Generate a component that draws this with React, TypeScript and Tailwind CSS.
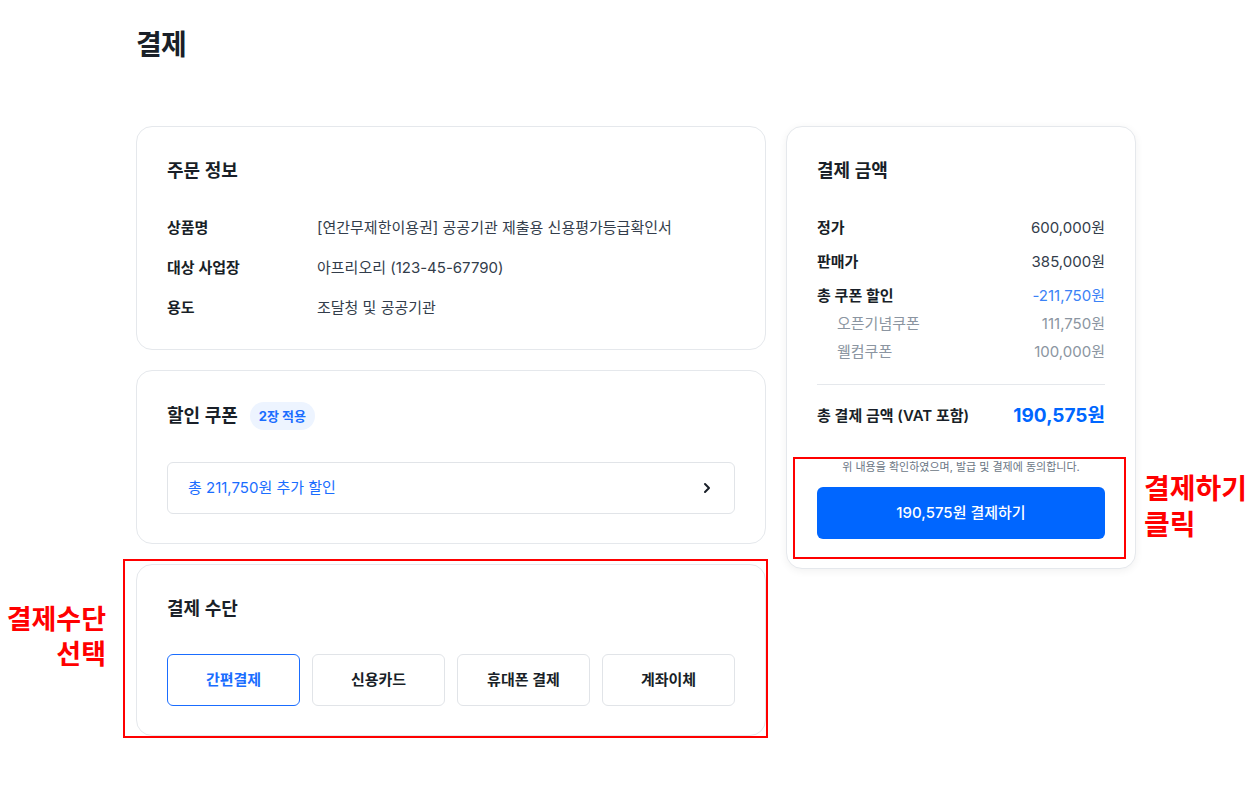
import React, { useState } from 'react';

const FONT = 'font-["Inter","Noto_Sans_CJK_KR",sans-serif]';

const orderRows = [
  { label: '상품명', value: '[연간무제한이용권] 공공기관 제출용 신용평가등급확인서' },
  { label: '대상 사업장', value: '아프리오리 (123-45-67790)' },
  { label: '용도', value: '조달청 및 공공기관' },
];

const methods = ['간편결제', '신용카드', '휴대폰 결제', '계좌이체'];

function Card({ children }: { children: React.ReactNode }) {
  return (
    <div className="rounded-2xl border border-[#e5e8ec] bg-white px-[30px] pt-[31px] pb-[29px]">
      {children}
    </div>
  );
}

export default function App() {
  const [method, setMethod] = useState(0);

  return (
    <div className={`${FONT} relative min-h-[788px] bg-white text-[#191f28]`}>
      <div className="ml-[136px] w-[1000px] pt-[27px]">
        <h1 className="text-[28px] font-bold leading-9 tracking-tight">결제</h1>

        <div className="mt-[63px] flex items-start gap-5">
          {/* left column */}
          <div className="flex w-[630px] flex-col gap-5">
            {/* 주문 정보 */}
            <Card>
              <h2 className="text-lg font-semibold leading-[26px]">주문 정보</h2>
              <div className="mt-8 flex flex-col gap-4">
                {orderRows.map((row) => (
                  <div key={row.label} className="flex text-[15px] leading-6">
                    <span className="w-[150px] font-semibold">{row.label}</span>
                    <span className="text-[#333d4b]">{row.value}</span>
                  </div>
                ))}
              </div>
            </Card>

            {/* 할인 쿠폰 */}
            <Card>
              <div className="flex items-center gap-3">
                <h2 className="text-lg font-semibold leading-[26px]">할인 쿠폰</h2>
                <span className="rounded-full bg-[#edf4ff] px-[9px] text-[13px] font-bold leading-7 text-[#1a6dff]">
                  2장 적용
                </span>
              </div>
              <button
                type="button"
                className="mt-8 flex h-[52px] w-full items-center justify-between rounded-md border border-[#e1e4e8] px-5 text-[15px] text-[#1a6dff]"
              >
                <span>총 211,750원 추가 할인</span>
                <svg width="14" height="14" viewBox="0 0 14 14" fill="none">
                  <path d="M5 3l4 4-4 4" stroke="#191f28" strokeWidth="2" strokeLinecap="round" strokeLinejoin="round" />
                </svg>
              </button>
            </Card>

            {/* 결제 수단 */}
            <Card>
              <h2 className="text-lg font-semibold leading-[26px]">결제 수단</h2>
              <div className="mt-8 grid grid-cols-4 gap-3">
                {methods.map((m, i) => (
                  <button
                    key={m}
                    type="button"
                    onClick={() => setMethod(i)}
                    className={`h-[52px] rounded-md border text-[15px] font-semibold ${
                      method === i ? 'border-[#1a6dff] text-[#1a6dff]' : 'border-[#e1e4e8] text-[#191f28]'
                    }`}
                  >
                    {m}
                  </button>
                ))}
              </div>
            </Card>
          </div>

          {/* right column */}
          <div className="w-[350px] rounded-2xl border border-[#e5e8ec] bg-white px-[30px] pt-[31px] pb-[29px] shadow-[0_2px_8px_rgba(0,0,0,0.06)]">
            <h2 className="text-lg font-semibold leading-[26px]">결제 금액</h2>
            <div className="mt-8 flex flex-col text-[15px] leading-6">
              <div className="flex justify-between">
                <span className="font-semibold">정가</span>
                <span className="text-[#333d4b]">600,000원</span>
              </div>
              <div className="mt-[10px] flex justify-between">
                <span className="font-semibold">판매가</span>
                <span className="text-[#333d4b]">385,000원</span>
              </div>
              <div className="mt-[10px] flex justify-between">
                <span className="font-semibold">총 쿠폰 할인</span>
                <span className="text-[#3b82f6]">-211,750원</span>
              </div>
              <div className="mt-1 flex justify-between pl-5 text-[#8b95a1]">
                <span>오픈기념쿠폰</span>
                <span>111,750원</span>
              </div>
              <div className="mt-1 flex justify-between pl-5 text-[#8b95a1]">
                <span>웰컴쿠폰</span>
                <span>100,000원</span>
              </div>
            </div>
            <div className="mt-5 h-px bg-[#e5e8ec]" />
            <div className="mt-4 flex items-center justify-between leading-[30px]">
              <span className="text-[15px] font-semibold">총 결제 금액 (VAT 포함)</span>
              <span className="text-[19px] font-bold text-[#0066ff]">190,575원</span>
            </div>
            <p className="mt-7 text-center text-[11px] leading-4 text-[#6b7684]">
              위 내용을 확인하였으며, 발급 및 결제에 동의합니다.
            </p>
            <button
              type="button"
              className="mt-3 h-[52px] w-full rounded-md bg-[#0066ff] text-[15px] font-medium text-white"
            >
              190,575원 결제하기
            </button>
          </div>
        </div>
      </div>

      {/* annotations */}
      <div className="pointer-events-none absolute left-[123px] top-[559px] h-[179px] w-[645px] border-2 border-[#ff0000]" />
      <div className="pointer-events-none absolute left-[793px] top-[457px] h-[102px] w-[333px] border-2 border-[#ff0000]" />
      <div className="pointer-events-none absolute left-0 top-[602px] w-[106px] text-right text-[27px] font-bold leading-[35px] text-[#ff0000]">
        결제수단
        <br />
        선택
      </div>
      <div className="pointer-events-none absolute left-[1144px] top-[471px] whitespace-nowrap text-[28px] font-bold leading-9 text-[#ff0000]">
        결제하기
        <br />
        클릭
      </div>
    </div>
  );
}
